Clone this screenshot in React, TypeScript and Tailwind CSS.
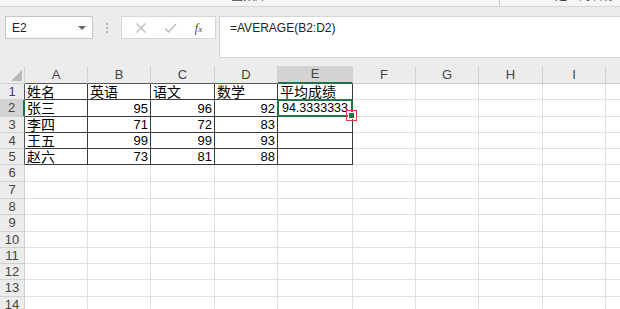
import React from 'react';

const colWidths = [25, 63, 63, 64, 63, 75, 63, 63, 64, 63, 63];
const colNames = ['', 'A', 'B', 'C', 'D', 'E', 'F', 'G', 'H', 'I', ''];
const rowHeights = [16, 17, 16, 16, 16, 17, 17, 16, 17, 16, 16, 16, 17, 17];

const data: (string | number)[][] = [
  ['姓名', '英语', '语文', '数学', '平均成绩'],
  ['张三', 95, 96, 92, '94.3333333'],
  ['李四', 71, 72, 83, ''],
  ['王五', 99, 99, 93, ''],
  ['赵六', 73, 81, 88, ''],
];

const cellFont = { fontFamily: '"Liberation Sans", "Noto Sans CJK SC", sans-serif' };

export default function App() {
  return (
    <div className="w-[620px] h-[309px] overflow-hidden bg-[#ececec] flex flex-col" style={cellFont}>
      {/* ribbon remains */}
      <div className="h-[7px] shrink-0 bg-[#f5f5f5] border-b border-[#d4d4d4] overflow-hidden flex text-[12px] text-[#444]">
        <span className="ml-[231px] -mt-[12px] leading-[16px]">函数库</span>
        <span className="ml-[232px] w-px h-full bg-[#c8c8c8]" />
        <span className="ml-[55px] -mt-[12px] leading-[16px]">定义的名称</span>
      </div>

      {/* formula bar */}
      <div className="h-[59px] shrink-0 flex items-start pt-[9px]">
        <div className="ml-[5px] w-[88px] h-[23px] bg-white border border-[#c6c6c6] flex items-center justify-between pl-[6px] pr-[6px] text-[12px] text-[#222]">
          <span>E2</span>
          <span className="w-0 h-0 border-l-[4px] border-r-[4px] border-t-[4px] border-l-transparent border-r-transparent border-t-[#666]" />
        </div>
        <div className="w-[28px] h-[23px] flex flex-col items-center justify-center gap-[2px]">
          <span className="w-[2px] h-[2px] bg-[#b4b4b4]" />
          <span className="w-[2px] h-[2px] bg-[#b4b4b4]" />
          <span className="w-[2px] h-[2px] bg-[#b4b4b4]" />
        </div>
        <div className="w-[95px] h-[23px] bg-white border border-[#d6d6d6] flex items-center justify-around px-[4px]">
          <svg width="12" height="12" viewBox="0 0 12 12">
            <path d="M1.5 1.5 L10.5 10.5 M10.5 1.5 L1.5 10.5" stroke="#b9b9b9" strokeWidth="1.2" fill="none" />
          </svg>
          <svg width="13" height="12" viewBox="0 0 13 12">
            <path d="M1 6.5 L4.5 10 L12 2" stroke="#b9b9b9" strokeWidth="1.3" fill="none" />
          </svg>
          <span className="text-[12px] italic text-[#444]" style={{ fontFamily: '"Liberation Serif", serif' }}>
            f<span className="text-[9px]">x</span>
          </span>
        </div>
        <div className="ml-[3px] flex-1 h-[42px] bg-white border border-[#d6d6d6] border-r-0 pl-[10px] pt-[2px] text-[12px] text-[#222]">
          =AVERAGE(B2:D2)
        </div>
      </div>

      {/* grid */}
      <div className="flex-1 flex flex-col bg-white">
        <div className="flex h-[18px] shrink-0 bg-[#ececec]">
          {colNames.map((n, i) => {
            const sel = n === 'E';
            const inData = i >= 1 && i <= 5;
            return (
              <div
                key={i}
                style={{ width: colWidths[i] }}
                className={
                  'shrink-0 relative flex items-center justify-center text-[13px] text-[#444] border-r border-[#d0d0d0] ' +
                  (sel ? 'bg-[#d3d3d3] border-b-2 border-b-[#217346]' : inData ? 'border-b border-b-[#555]' : 'border-b border-b-[#d0d0d0]')
                }
              >
                {i === 0 ? (
                  <svg className="absolute right-[2px] bottom-[2px]" width="11" height="11" viewBox="0 0 11 11">
                    <path d="M11 0 L11 11 L0 11 Z" fill="#b9b9b9" />
                  </svg>
                ) : (
                  n
                )}
              </div>
            );
          })}
        </div>
        {rowHeights.map((h, r) => (
          <div key={r} className="flex shrink-0" style={{ height: h }}>
            {colWidths.map((w, c) => {
              if (c === 0) {
                const sel = r === 1;
                const inData = r <= 4;
                return (
                  <div
                    key={c}
                    style={{ width: w }}
                    className={
                      'shrink-0 flex items-center justify-center text-[13px] text-[#444] border-b border-[#d0d0d0] ' +
                      (sel ? 'bg-[#d3d3d3] border-r-2 border-r-[#217346]' : inData ? 'bg-[#ececec] border-r border-r-[#555]' : 'bg-[#ececec] border-r border-r-[#d0d0d0]')
                    }
                  >
                    {r + 1}
                  </div>
                );
              }
              const inData = r <= 4 && c <= 5;
              const v = inData ? data[r][c - 1] : '';
              const isNum = typeof v === 'number' || (r === 1 && c === 5);
              const isE2 = r === 1 && c === 5;
              return (
                <div
                  key={c}
                  style={{ width: w }}
                  className={
                    'shrink-0 relative flex items-center text-black leading-none px-[2px] ' +
                    (isNum ? 'text-[13px] justify-end ' : 'text-[14px] justify-start ') +
                    (inData ? 'border-r border-b border-[#3a3a3a]' : 'border-r border-b border-[#e1e1e1]')
                  }
                >
                  {v !== '' && <span className={isE2 ? 'mr-[2px] text-[12.5px]' : ''}>{v}</span>}
                  {isE2 && (
                    <>
                      <span className="absolute -left-[1px] -top-[1px] -right-[1px] -bottom-[1px] border-2 border-[#217346]" />
                      <span className="absolute -right-[5px] -bottom-[5px] w-[11px] h-[11px] border border-[#e23b3b] flex items-center justify-center z-10">
                        <span className="w-[5px] h-[5px] bg-[#217346] border border-white box-content" />
                      </span>
                    </>
                  )}
                </div>
              );
            })}
          </div>
        ))}
      </div>
    </div>
  );
}
